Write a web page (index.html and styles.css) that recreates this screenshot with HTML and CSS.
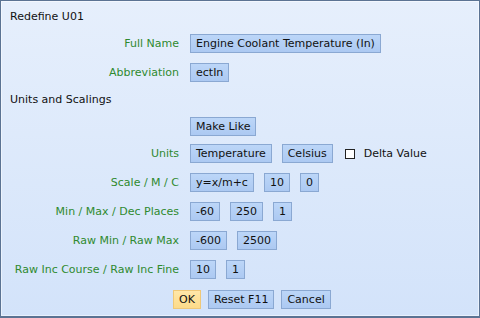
FILE: index.html
```html
<!DOCTYPE html>
<html lang="en">
<head>
  <meta charset="UTF-8">
  <title>Redefine U01</title>
  <link rel="stylesheet" href="styles.css">
</head>
<body>
  <div class="dialog">
    <div class="row title">Redefine U01</div>
    <div class="row">
      <span class="label">Full Name</span>
      <span class="btn">Engine Coolant Temperature (In)</span>
    </div>
    <div class="row abbrev">
      <span class="label">Abbreviation</span>
      <span class="btn">ectIn</span>
    </div>
    <div class="row section">Units and Scalings</div>
    <div class="row makelike">
      <span class="label"></span>
      <span class="btn">Make Like</span>
    </div>
    <div class="row">
      <span class="label">Units</span>
      <span class="btn">Temperature</span>
      <span class="btn">Celsius</span>
      <span class="check"><span class="box"></span>Delta Value</span>
    </div>
    <div class="row">
      <span class="label">Scale / M / C</span>
      <span class="btn">y=x/m+c</span>
      <span class="btn">10</span>
      <span class="btn">0</span>
    </div>
    <div class="row">
      <span class="label">Min / Max / Dec Places</span>
      <span class="btn">-60</span>
      <span class="btn">250</span>
      <span class="btn">1</span>
    </div>
    <div class="row">
      <span class="label">Raw Min / Raw Max</span>
      <span class="btn">-600</span>
      <span class="btn">2500</span>
    </div>
    <div class="row">
      <span class="label">Raw Inc Course / Raw Inc Fine</span>
      <span class="btn">10</span>
      <span class="btn">1</span>
    </div>
    <div class="row actions">
      <span class="btn ok">OK</span>
      <span class="btn">Reset F11</span>
      <span class="btn">Cancel</span>
    </div>
  </div>
</body>
</html>
```

FILE: styles.css
```css
body {
  margin: 0;
  font-family: 'DejaVu Sans', Verdana, sans-serif;
  font-size: 11px;
  color: #111;
}
.dialog {
  box-sizing: border-box;
  width: 480px;
  height: 318px;
  padding-top: 2px;
  border: 1px solid #5b7393;
  border-bottom-width: 2px;
  background: linear-gradient(to bottom, #e6effc, #d3e3fa);
  box-shadow: inset 0 0 0 1px rgba(255,255,255,0.5);
}
.row {
  display: flex;
  align-items: center;
  height: 29px;
  gap: 10px;
}
.title {
  height: 26px;
  padding-left: 9px;
}
.abbrev {
  height: 28px;
}
.section {
  height: 27px;
  padding-left: 9px;
}
.makelike {
  height: 26px;
}
.label {
  width: 178px;
  margin-right: 1px;
  text-align: right;
  color: #2f8a2f;
  white-space: nowrap;
}
.btn {
  display: inline-flex;
  align-items: center;
  height: 17px;
  padding: 0 5px;
  border: 1px solid #8aa8d2;
  background: linear-gradient(to bottom, #bcd6f8, #acc9f2);
  white-space: nowrap;
}
.btn.ok {
  background: linear-gradient(to bottom, #ffe7a8, #fddb8a);
  border-color: #efc878;
}
.check {
  display: inline-flex;
  align-items: center;
  margin-left: 2px;
}
.box {
  width: 8px;
  height: 8px;
  border: 1px solid #222;
  background: #fff;
  margin-right: 9px;
}
.actions {
  height: 31px;
  padding-left: 172px;
  gap: 7px;
}
```
